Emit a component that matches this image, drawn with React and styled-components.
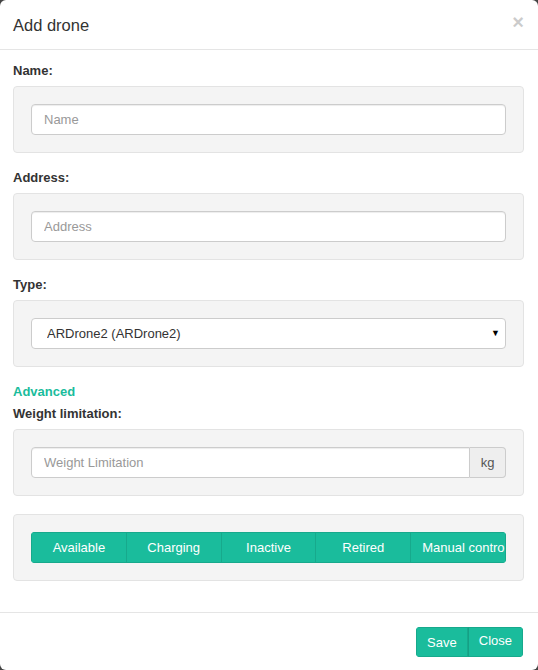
import styled, { createGlobalStyle } from "styled-components";

const GlobalStyle = createGlobalStyle`
  * { box-sizing: border-box; }
  html, body {
    margin: 0;
    padding: 0;
    background: #444;
  }
  body {
    font-family: "Liberation Sans", Arial, sans-serif;
    font-size: 13px;
    line-height: 20px;
    color: #333;
  }
`;

const STATUSES = ["Available", "Charging", "Inactive", "Retired", "Manual control"];

const App = () => {
  return (
    <>
      <GlobalStyle />
      <Modal>
        <Header>
          <Title>Add drone</Title>
          <CloseX>×</CloseX>
        </Header>

        <Body>
          <Section>
            <Label>Name:</Label>
            <Well>
              <Input placeholder="Name" />
            </Well>
          </Section>

          <Section>
            <Label>Address:</Label>
            <Well>
              <Input placeholder="Address" />
            </Well>
          </Section>

          <Section>
            <Label>Type:</Label>
            <Well>
              <SelectWrap>
                <Select defaultValue="ardrone2">
                  <option value="ardrone2">ARDrone2 (ARDrone2)</option>
                </Select>
                <Caret>▼</Caret>
              </SelectWrap>
            </Well>
          </Section>

          <Advanced>Advanced</Advanced>
          <Section>
            <Label>Weight limitation:</Label>
            <Well>
              <InputGroup>
                <Input placeholder="Weight Limitation" $grouped />
                <Addon>kg</Addon>
              </InputGroup>
            </Well>
          </Section>

          <Section $top={18}>
            <Well>
              <StatusGroup>
                {STATUSES.map((s) => (
                  <StatusButton key={s}>{s}</StatusButton>
                ))}
              </StatusGroup>
            </Well>
          </Section>
        </Body>

        <Footer>
          <FooterGroup>
            <FooterButton>Save</FooterButton>
            <FooterButton $raise>Close</FooterButton>
          </FooterGroup>
        </Footer>
      </Modal>
    </>
  );
};

const Modal = styled.div`
  width: 538px;
  height: 670px;
  background: #fff;
  border-radius: 6px;
  display: flex;
  flex-direction: column;
  overflow: hidden;
`;

const Header = styled.div`
  display: flex;
  justify-content: space-between;
  align-items: flex-start;
  padding: 15px 14px 14px 13px;
  border-bottom: 1px solid #e5e5e5;
`;

const Title = styled.h4`
  margin: 0;
  font-size: 16.5px;
  font-weight: normal;
  line-height: 20px;
  color: #333;
`;

const CloseX = styled.span`
  font-size: 20px;
  font-weight: bold;
  line-height: 14px;
  color: #000;
  opacity: 0.2;
`;

const Body = styled.div`
  flex: 1;
  padding: 11px 14px 0 13px;
`;

const Section = styled.div`
  margin-top: ${(p) => p.$top || 0}px;
  margin-bottom: 15px;
`;

const Label = styled.div`
  font-weight: bold;
  line-height: 20px;
  margin-bottom: 5px;
`;

const Advanced = styled.div`
  font-weight: bold;
  color: #1abc9c;
  line-height: 20px;
  margin-bottom: 2px;
`;

const Well = styled.div`
  background: #f4f4f4;
  border: 1px solid #e3e3e3;
  border-radius: 4px;
  padding: 17px;
`;

const Input = styled.input`
  display: block;
  width: 100%;
  height: 31px;
  padding: 5px 12px;
  font-family: inherit;
  font-size: 13px;
  color: #555;
  background: #fff;
  border: 1px solid #ccc;
  border-radius: ${(p) => (p.$grouped ? "4px 0 0 4px" : "4px")};
  box-shadow: inset 0 1px 1px rgba(0, 0, 0, 0.075);
  outline: none;

  &::placeholder {
    color: #999;
  }
`;

const InputGroup = styled.div`
  display: flex;
`;

const Addon = styled.span`
  width: 36px;
  flex-shrink: 0;
  display: flex;
  align-items: center;
  justify-content: center;
  background: #eee;
  border: 1px solid #ccc;
  border-left: none;
  border-radius: 0 4px 4px 0;
  color: #555;
`;

const SelectWrap = styled.div`
  position: relative;
`;

const Select = styled.select`
  display: block;
  width: 100%;
  height: 31px;
  padding: 4px 15px;
  font-family: inherit;
  font-size: 13px;
  color: #333;
  background: #fff;
  border: 1px solid #ccc;
  border-radius: 4px;
  appearance: none;
  outline: none;
`;

const Caret = styled.span`
  position: absolute;
  right: 6px;
  top: 8px;
  font-size: 9px;
  line-height: 14px;
  color: #000;
  pointer-events: none;
`;

const StatusGroup = styled.div`
  display: flex;
  border-radius: 4px;
  overflow: hidden;
`;

const StatusButton = styled.button`
  flex: 1 1 0;
  min-width: 0;
  height: 31px;
  padding: 5px 11px;
  font-family: inherit;
  font-size: 13px;
  color: #fff;
  background: #1abc9c;
  border: 1px solid #17a98c;
  border-left-width: 0;
  white-space: nowrap;
  overflow: hidden;
  text-align: center;

  &:first-child {
    border-left-width: 1px;
  }
`;

const Footer = styled.div`
  display: flex;
  justify-content: flex-end;
  padding: 14px 15px 13px 13px;
  border-top: 1px solid #e5e5e5;
`;

const FooterGroup = styled.div`
  display: flex;
  border-radius: 4px;
  overflow: hidden;
`;

const FooterButton = styled.button`
  height: 30px;
  padding: ${(p) => (p.$raise ? "3px 10px 7px" : "5px 10px")};
  font-family: inherit;
  font-size: 13px;
  color: #fff;
  background: #1abc9c;
  border: 1px solid #17a98c;

  & + & {
    border-left-color: #15a085;
    border-left-width: 1px;
  }
`;

export default App;
